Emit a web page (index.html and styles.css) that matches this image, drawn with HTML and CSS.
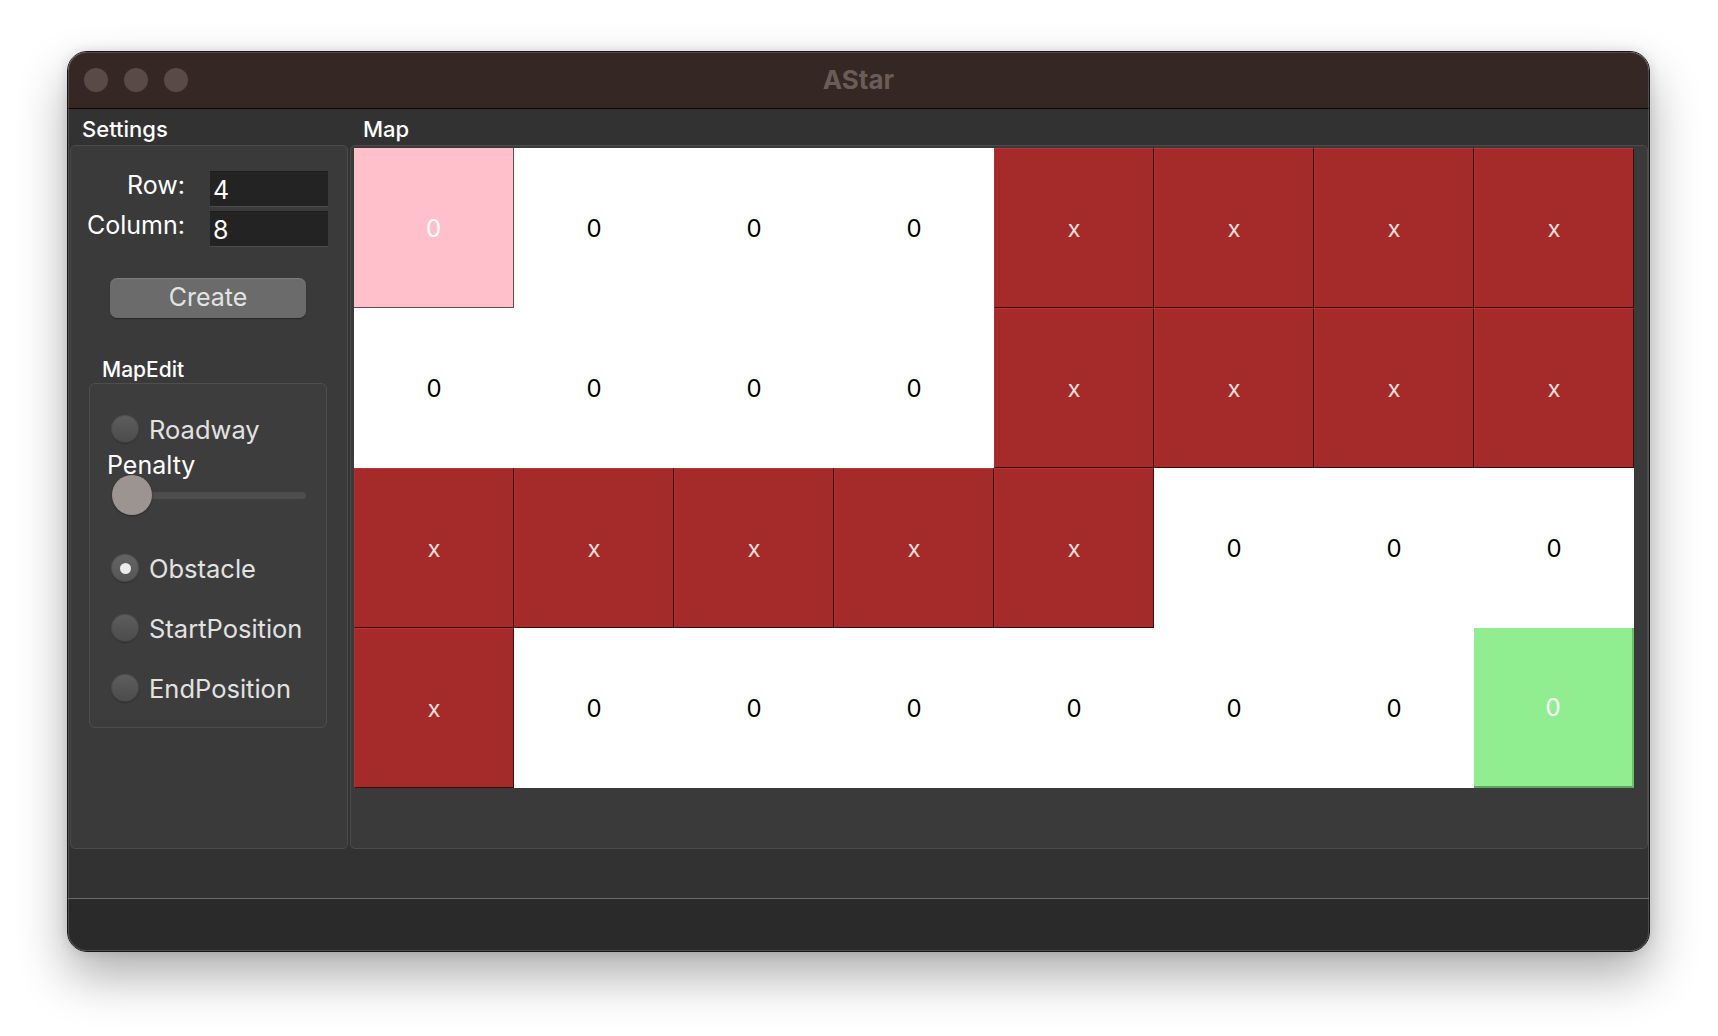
FILE: index.html
```html
<!DOCTYPE html>
<html>
<head>
<meta charset="utf-8">
<title>AStar</title>
<link rel="stylesheet" href="styles.css">
</head>
<body>
<div class="window">
  <div class="titlebar">
    <div class="lights">
      <span class="light"></span><span class="light"></span><span class="light"></span>
    </div>
    <div class="title">AStar</div>
    <div></div>
  </div>
  <div class="main">
    <div class="labels">
      <div class="label-settings">Settings</div>
      <div class="label-map">Map</div>
    </div>
    <div class="panels">
      <div class="panel settings">
        <div class="form">
          <div class="flabel">Row:</div>
          <div class="input">4</div>
          <div class="flabel">Column:</div>
          <div class="input">8</div>
        </div>
        <div class="button">Create</div>
        <div class="group-title">MapEdit</div>
        <div class="group">
          <div class="radio-row first"><span class="radio"></span><span class="rtext">Roadway</span></div>
          <div class="penalty">Penalty</div>
          <div class="slider"><div class="track"></div><div class="knob"></div></div>
          <div class="radio-row obstacle"><span class="radio checked"></span><span class="rtext">Obstacle</span></div>
          <div class="radio-row next"><span class="radio"></span><span class="rtext">StartPosition</span></div>
          <div class="radio-row next"><span class="radio"></span><span class="rtext">EndPosition</span></div>
        </div>
      </div>
      <div class="panel map">
        <div class="grid">
          <div class="cell start">0</div>
          <div class="cell">0</div>
          <div class="cell">0</div>
          <div class="cell">0</div>
          <div class="cell wall">x</div>
          <div class="cell wall">x</div>
          <div class="cell wall">x</div>
          <div class="cell wall">x</div>

          <div class="cell">0</div>
          <div class="cell">0</div>
          <div class="cell">0</div>
          <div class="cell">0</div>
          <div class="cell wall">x</div>
          <div class="cell wall">x</div>
          <div class="cell wall">x</div>
          <div class="cell wall">x</div>

          <div class="cell wall">x</div>
          <div class="cell wall">x</div>
          <div class="cell wall">x</div>
          <div class="cell wall">x</div>
          <div class="cell wall">x</div>
          <div class="cell">0</div>
          <div class="cell">0</div>
          <div class="cell">0</div>

          <div class="cell wall">x</div>
          <div class="cell">0</div>
          <div class="cell">0</div>
          <div class="cell">0</div>
          <div class="cell">0</div>
          <div class="cell">0</div>
          <div class="cell">0</div>
          <div class="cell end">0</div>
        </div>
      </div>
    </div>
    <div class="spacer"></div>
    <div class="statusbar"></div>
  </div>
</div>
</body>
</html>
```

FILE: styles.css
```css
html, body {
  margin: 0;
  padding: 0;
}
body {
  width: 1718px;
  height: 1036px;
  overflow: hidden;
  background: #ffffff;
  font-family: "Inter", "Liberation Sans", sans-serif;
  color: #ffffff;
}
.window {
  position: relative;
  margin: 51px 0 0 67px;
  width: 1583px;
  height: 901px;
  box-sizing: border-box;
  border: 1px solid #161616;
  border-radius: 20px;
  overflow: hidden;
  display: flex;
  flex-direction: column;
  box-shadow: 0 24px 50px rgba(0, 0, 0, 0.32), 0 0 12px rgba(0, 0, 0, 0.12);
}
.window::after {
  content: "";
  position: absolute;
  inset: 0;
  border-radius: 19px;
  box-shadow: inset 0 0 0 1px rgba(255, 255, 255, 0.16);
  pointer-events: none;
}
.titlebar {
  height: 56px;
  flex: none;
  background: #352724;
  border-bottom: 1px solid #0c0605;
  display: grid;
  grid-template-columns: 1fr auto 1fr;
  align-items: center;
}
.lights {
  display: flex;
  gap: 16px;
  padding-left: 16px;
}
.light {
  width: 24px;
  height: 24px;
  border-radius: 50%;
  background: #594a46;
}
.title {
  font-size: 26px;
  font-weight: 700;
  color: #6b5c58;
  padding-bottom: 1px;
}
.main {
  flex: 1;
  display: flex;
  flex-direction: column;
  background: #323232;
}
.labels {
  height: 36px;
  flex: none;
  display: flex;
  align-items: center;
  padding-top: 3px;
  box-sizing: border-box;
  font-size: 22px;
  font-weight: 500;
}
.label-settings {
  width: 280px;
  padding-left: 14px;
  box-sizing: border-box;
}
.label-map {
  padding-left: 15px;
}
.panels {
  height: 704px;
  flex: none;
  display: flex;
  gap: 2px;
  padding: 0 1px 0 2px;
}
.panel {
  box-sizing: border-box;
  background: #3a3a3a;
  border: 1px solid #4b4b4b;
  border-radius: 5px;
}
.settings {
  width: 278px;
  display: flex;
  flex-direction: column;
}
.map {
  flex: 1;
  padding: 2px 0 0 3px;
}
.form {
  margin-top: 25px;
  display: grid;
  grid-template-columns: 114px 118px;
  column-gap: 25px;
  row-gap: 4px;
}
.flabel {
  text-align: right;
  font-size: 25px;
  line-height: 28px;
  height: 36px;
}
.input {
  height: 36px;
  box-sizing: border-box;
  background: #232323;
  border-top: 1px solid #1e1e1e;
  border-bottom: 1px solid #4a4a4a;
  font-size: 25px;
  line-height: 36px;
  padding-left: 3px;
  overflow: hidden;
}
.button {
  margin: 31px 0 0 39px;
  width: 196px;
  height: 40px;
  box-sizing: border-box;
  border-radius: 7px;
  background: #6b6b6b;
  box-shadow: 0 1px 1px rgba(0, 0, 0, 0.35), inset 0 1px 0 rgba(255, 255, 255, 0.12);
  color: #e3e3e3;
  font-size: 25px;
  line-height: 39px;
  text-align: center;
}
.group-title {
  margin-top: 39px;
  height: 26px;
  line-height: 26px;
  padding-left: 31px;
  font-size: 21px;
  font-weight: 500;
}
.group {
  margin-left: 18px;
  width: 238px;
  height: 345px;
  box-sizing: border-box;
  border: 1px solid #4e4e4e;
  border-radius: 6px;
  background: #3d3d3d;
  display: flex;
  flex-direction: column;
}
.radio-row {
  height: 36px;
  display: flex;
  align-items: center;
  padding-left: 21px;
}
.radio-row.first {
  margin-top: 27px;
}
.radio-row.obstacle {
  margin-top: 40px;
}
.radio-row.next {
  margin-top: 24px;
}
.radio {
  position: relative;
  width: 28px;
  height: 28px;
  box-sizing: border-box;
  border-radius: 50%;
  background: linear-gradient(#5e5e5e, #4b4b4b);
  box-shadow: inset 0 0 0 1px rgba(0, 0, 0, 0.15), 0 1px 1px rgba(0, 0, 0, 0.25);
  flex: none;
}
.radio.checked {
  background: linear-gradient(#646464, #555555);
}
.radio.checked::after {
  content: "";
  position: absolute;
  left: 8.5px;
  top: 8.5px;
  width: 11px;
  height: 11px;
  border-radius: 50%;
  background: #ececec;
}
.rtext {
  margin-left: 10px;
  font-size: 25.5px;
  color: #e2e2e2;
}
.penalty {
  margin-top: 3px;
  height: 30px;
  line-height: 30px;
  padding-left: 17px;
  font-size: 25px;
  color: #ffffff;
}
.slider {
  position: relative;
  height: 30px;
  margin-left: 22px;
  width: 194px;
  display: flex;
  align-items: center;
}
.track {
  width: 100%;
  height: 7px;
  border-radius: 4px;
  background: #4d4d4d;
}
.knob {
  position: absolute;
  left: 0;
  top: -5px;
  width: 40px;
  height: 40px;
  border-radius: 50%;
  background: #9b9491;
  box-shadow: 0 1px 2px rgba(0, 0, 0, 0.35);
}
.grid {
  display: grid;
  grid-template-columns: repeat(8, 160px);
  grid-auto-rows: 160px;
}
.cell {
  box-sizing: border-box;
  background: #ffffff;
  color: #000000;
  display: flex;
  align-items: center;
  justify-content: center;
  font-size: 24px;
  padding-top: 1px;
}
.cell.wall {
  background: #a52a2a;
  color: #f0dede;
  border-top: 1px solid #c23232;
  border-left: 1px solid #b32e2e;
  border-right: 1px solid #3a0c0c;
  border-bottom: 1px solid #3a0c0c;
}
.cell.start {
  background: #ffc0cb;
  color: #ffffff;
  border-right: 1px solid #6a4a50;
  border-bottom: 1px solid #6a4a50;
}
.cell.end {
  background: #90ee90;
  color: #ffffff;
  border-right: 2px solid #6fbf6f;
  border-bottom: 2px solid #5fa55f;
}
.spacer {
  height: 49px;
  flex: none;
}
.statusbar {
  flex: 1;
  background: #2a2a2a;
  border-top: 1px solid #6a6a6a;
}
```
